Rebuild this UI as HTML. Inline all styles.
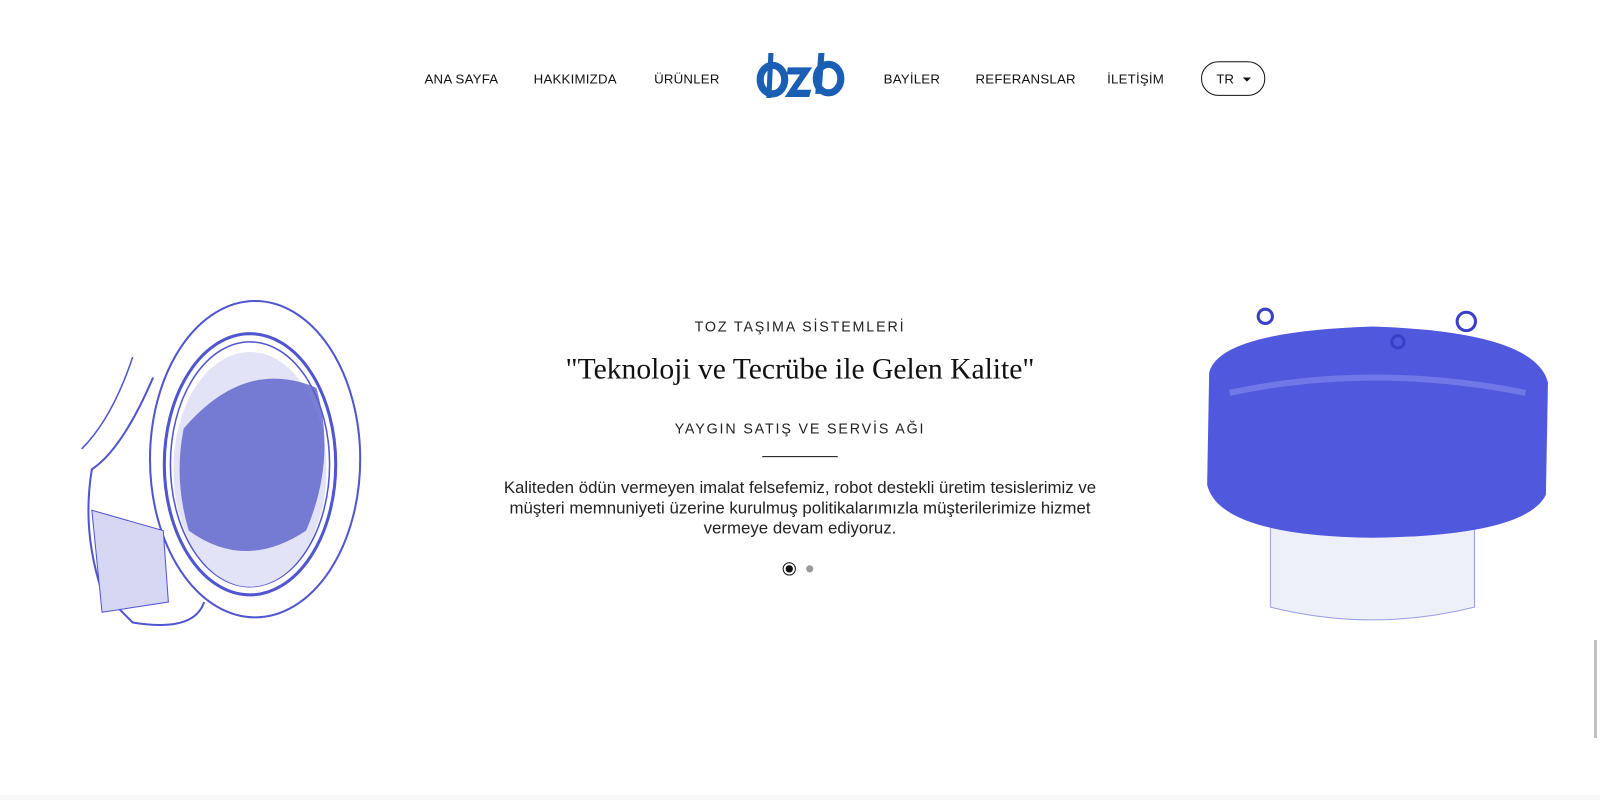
<!DOCTYPE html>
<html><head><meta charset="utf-8"><style>
html,body{margin:0;padding:0;width:1600px;height:800px;overflow:hidden;background:#fff;font-family:"Liberation Sans",sans-serif;color:#111}
#w{position:absolute;left:0;top:0;width:1568px;height:784px;transform:scale(1.0204);transform-origin:0 0}
.nav a{position:absolute;top:70px;font-size:13px;color:#111;text-decoration:none;letter-spacing:.2px}
.tr{position:absolute;left:1177px;top:60px;width:63px;height:34px;border:1.3px solid #111;border-radius:17px;box-sizing:border-box;font-size:13px}
.c{position:absolute;left:0;width:1568px;text-align:center}
</style></head><body>
<div id="w">
<div class="nav">
<a style="left:416px">ANA SAYFA</a>
<a style="left:523px">HAKKIMIZDA</a>
<a style="left:641px">ÜRÜNLER</a>
<a style="left:866px">BAYİLER</a>
<a style="left:956px">REFERANSLAR</a>
<a style="left:1085px">İLETİŞİM</a>
</div>
<div class="tr"><span style="position:absolute;left:14px;top:9px">TR</span><span style="position:absolute;left:40px;top:15px;border:4px solid transparent;border-top:4px solid #111;border-bottom:0"></span></div>
<svg style="position:absolute;left:740px;top:50px" width="90" height="48" viewBox="0 0 90 48">
<g fill="none" stroke="#1a5fb4" stroke-width="7">
<ellipse cx="17" cy="28" rx="12" ry="14"/>
<ellipse cx="72" cy="27" rx="12" ry="14"/>
</g>
<g fill="#1a5fb4"><path d="M13 2h5l-2 44h-5z"/><path d="M62 2h6l-3 40h-6z"/>
<path d="M32 16h24l-15 22h14l-2 7H29l15-22H31z"/></g>
</svg>
<div class="c" style="top:312px;font-size:14px;letter-spacing:1.8px;color:#222">TOZ TAŞIMA SİSTEMLERİ</div>
<div class="c" style="top:346px;font-family:'Liberation Serif',serif;font-size:29px;color:#111">"Teknoloji ve Tecrübe ile Gelen Kalite"</div>
<div class="c" style="top:412px;font-size:14px;letter-spacing:1.8px;color:#222">YAYGIN SATIŞ VE SERVİS AĞI</div>
<div style="position:absolute;left:747px;top:447px;width:74px;height:1px;background:#111"></div>
<div class="c" style="top:468px;font-size:16.5px;line-height:20px;color:#222;left:479px;width:610px">Kaliteden ödün vermeyen imalat felsefemiz, robot destekli üretim tesislerimiz ve müşteri memnuniyeti üzerine kurulmuş politikalarımızla müşterilerimize hizmet vermeye devam ediyoruz.</div>
<div style="position:absolute;left:767px;top:551px;width:13px;height:13px;border:1.3px solid #111;border-radius:50%;box-sizing:border-box"><div style="margin:2px;width:6.5px;height:6.5px;border-radius:50%;background:#111"></div></div>
<div style="position:absolute;left:790px;top:554px;width:7px;height:7px;border-radius:50%;background:#999"></div>
<svg style="position:absolute;left:70px;top:290px" width="300" height="330" viewBox="0 0 300 330">
<g fill="none" stroke="#5055d0">
<ellipse cx="180" cy="160" rx="103" ry="155" stroke-width="2"/>
<ellipse cx="175" cy="165" rx="84" ry="128" stroke-width="3"/>
<ellipse cx="175" cy="165" rx="78" ry="120" stroke-width="1.5"/>
<path d="M80 80 Q50 150 20 170 Q10 230 30 290 L60 320 Q120 330 130 300" stroke-width="2"/>
<path d="M60 60 Q40 120 10 150" stroke-width="1.5"/>
</g>
<ellipse cx="175" cy="170" rx="75" ry="115" fill="#e2e3f7"/>
<path d="M110 130 Q170 60 240 90 Q260 160 230 230 Q170 270 115 230 Q100 180 110 130z" fill="#5a5fc8" opacity=".8"/>
<path d="M20 210 L90 230 L95 300 L30 310z" fill="#d6d8f3" stroke="#5055d0"/>
</svg>
<svg style="position:absolute;left:1175px;top:295px" width="350" height="320" viewBox="0 0 350 320">
<path d="M70 215 L70 300 Q170 325 270 300 L270 215z" fill="#eef0f9" stroke="#9a9ee0"/>
<path d="M10 70 Q20 30 170 25 Q330 30 342 80 L340 190 Q320 230 170 232 Q20 230 8 180z" fill="#5058dd"/>
<path d="M30 90 Q170 60 320 90" fill="none" stroke="#7077e6" stroke-width="6"/>
<g fill="none" stroke="#3a3fc8" stroke-width="3"><circle cx="65" cy="15" r="7"/><circle cx="262" cy="20" r="9"/><circle cx="195" cy="40" r="6"/></g>
</svg>
</div>
<div style="position:absolute;left:1594px;top:640px;width:3px;height:98px;background:#c2c2c2"></div>
<div style="position:absolute;left:0;top:795px;width:1600px;height:5px;background:#f8f8f8"></div>
</body></html>
